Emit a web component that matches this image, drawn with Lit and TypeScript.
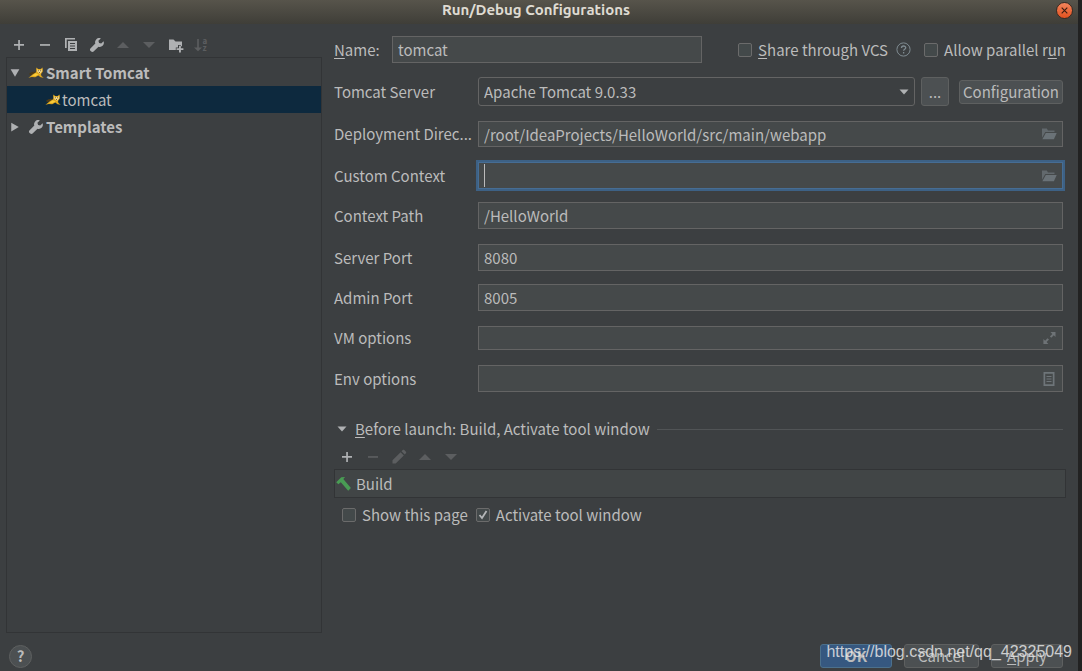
import { LitElement, html, css, svg, TemplateResult } from "lit";
import { customElement } from "lit/decorators.js";
import { classMap } from "lit/directives/class-map.js";

const icon = (body: TemplateResult, size = 16) =>
  html`<svg class="icon" width=${size} height=${size} viewBox="0 0 16 16" aria-hidden="true">${body}</svg>`;

const plus = svg`<path fill="#afb1b3" d="M7.200 3h1.700v4.100H13v1.700H8.900V13H7.200V8.800H3V7.100h4.200z"/>`;
const minus = (fill: string) => svg`<path fill=${fill} d="M3 7.100h10v1.700H3z"/>`;
const up = svg`<path fill="#5c5e60" d="M2 11 8 5l6 6z"/>`;
const down = svg`<path fill="#5c5e60" d="M2 5h12l-6 6z"/>`;
const copy = svg`
  <path fill="#afb1b3" d="M2 1h10v1.600H3.700V11H2z"/>
  <path fill="#afb1b3" fill-rule="evenodd" d="M5 4h9v10H5zM7 6v1h5V6zM7 8.500v1h5v-1zM7 11v1h5v-1z"/>`;
const wrench = svg`<path fill="#afb1b3" d="M14.600 4.200 12.200 6.600 10.100 5.900 9.400 3.800 11.800 1.400C10.200.8 8.400 1.100 7.200 2.400 6.100 3.500 5.800 5.100 6.300 6.500L1.400 11.400C.8 12 .8 13.100 1.400 13.800L2.200 14.600C2.900 15.200 4 15.200 4.600 14.600L9.500 9.700C10.900 10.200 12.500 9.900 13.600 8.800 14.900 7.600 15.200 5.800 14.600 4.200z"/>`;
const newFolder = svg`
  <path fill="#afb1b3" d="M2 2.500h4.500L8.500 4.600H15v4.600h-1.200V8H11v2.600H8.800V13H2z"/>
  <path fill="#afb1b3" d="M12 8.700h1.900v2.500h2.500v1.900h-2.500v2.500H12v-2.500H9.500v-1.900H12z"/>`;
const sort = svg`
  <path fill="#5c5e60" d="M4.200 2h1.600v8.500H9L5 14.200 1 10.500h3.200z"/>
  <text class="tiny" x="9.500" y="7">a</text><text class="tiny" x="9.500" y="14">z</text>`;
const cat = svg`
  <path fill="#4a3a1a" d="M1 8.800C3 7 5 6.300 8 6.800l-2 2.600-4 .6z"/>
  <path fill="#e0a81e" d="M.4 12.800C2.500 11.500 3.500 10.200 5.600 8.800L8.200 7.200 8.300 2.600l1.900 1.500h2.500L14.600 2.600l.2 4-1.800 2.500.4 1.900 2.300 1.700-3.100-.5-2.300-1.600L7.200 12.200l-3.400-.2z"/>
  <path fill="#f4dc92" d="M8.800 4 10.200 5h2.500l1.500-1-.2 2.500-2 2.200-2.600-1.700z"/>
  <path fill="#5b4312" d="M9.900 5.300h.8v.9h-.8zM12.300 5.300h.8v.9h-.8zM11 7.200h1v.8h-1z"/>
  <path fill="#fbcd3a" d="m4 10.800 3.800-2.500 2.800 1.300-2.900 1.500z"/>`;
const folder = svg`
  <path fill="#62696d" d="M1 2.500h4.800l1.200 2h6.500V6H4.300L1 11.800z"/>
  <path fill="#6a7277" d="M4.800 7h10.900L12.900 13.300H1.400z"/>`;
const expand = svg`
  <path fill="#6e7376" d="M9.500 2h5v5L12.800 5.300 10.300 7.800 8.900 6.400l2.400-2.500z"/>
  <path fill="#6e7376" d="M7.400 14h-5V9l1.700 1.700L6.500 8.200 8 9.600l-2.400 2.500z"/>`;
const doc = svg`<path fill="#6e7579" fill-rule="evenodd" d="M2.500 1h11v14h-11zM4.200 2.700v10.600h7.600V2.700zM5.500 5h5v1h-5zM5.500 7.500h5v1h-5zM5.500 10h5v1h-5z"/>`;
const pencil = svg`<path fill="#5c5e60" d="M1.500 14.500v-3.200L9.600 3.200l3.200 3.200-8.100 8.100zM10.500 2.300l1.200-1.200c.5-.5 1.100-.5 1.600 0l1.600 1.600c.5.5.5 1.100 0 1.600l-1.200 1.200z"/>`;
const hammer = svg`<path fill="#499c54" d="M.2 6.200 5.300 1.300l3.800-.2-1.800 2 7.600 8.900-2.700 2.800-7.400-8.600L2.400 8.300z"/>`;
const triDown = svg`<path fill="#afb1b3" d="M1 2h14l-7 12z"/>`;
const triRight = svg`<path fill="#afb1b3" d="M2 1v14l12-7z"/>`;
const arrow = svg`<path fill="#afb1b3" d="M3.500 5.500h9L8 10.500z"/>`;

interface Field {
  id: string;
  label: string;
  value: string;
  trailing?: TemplateResult;
  size?: "small" | "compact";
  focused?: boolean;
  tight?: boolean;
}

const FIELDS: Field[] = [
  { id: "deploy", label: "Deployment Direc...", value: "/root/IdeaProjects/HelloWorld/src/main/webapp", trailing: folder, size: "compact" },
  { id: "custom", label: "Custom Context", value: "", trailing: folder, focused: true, tight: true },
  { id: "path", label: "Context Path", value: "/HelloWorld" },
  { id: "port", label: "Server Port", value: "8080", tight: true },
  { id: "admin", label: "Admin Port", value: "8005" },
  { id: "vm", label: "VM options", value: "", trailing: expand, size: "small" },
  { id: "env", label: "Env options", value: "", trailing: doc },
];

@customElement("app-root")
export class AppRoot extends LitElement {
  static styles = css`
    :host {
      display: block;
      background: #222;
      color: #bbb;
      font: 15px/24px "Noto Sans CJK SC", "Noto Sans", sans-serif;
    }
    * { box-sizing: border-box; }
    input, button, select { font: inherit; color: inherit; margin: 0; }
    .icon { display: block; flex: none; overflow: visible; }
    .tiny { font: bold 8px "Noto Sans CJK SC", sans-serif; fill: #5c5e60; }
    .window {
      position: relative;
      display: flex;
      flex-direction: column;
      min-height: 100vh;
      margin-right: 4px;
      background: #3c3f41;
    }
    .titlebar {
      display: flex;
      align-items: center;
      height: 24px;
      padding: 0 5px 4px 16px;
      background: linear-gradient(#57544b, #3f3e38);
      color: #dfdbd2;
    }
    .title {
      flex: 1;
      margin: 0;
      text-align: center;
      font: bold 15px/20px Ubuntu, "Noto Sans", sans-serif;
    }
    .close {
      display: flex;
      width: 17px;
      height: 17px;
      padding: 0;
      border: 1px solid #3a2a22;
      border-radius: 50%;
      background: linear-gradient(#f4845c, #e2521f);
      align-items: center;
      justify-content: center;
    }
    .body { display: flex; flex: 1; gap: 12px; padding: 0 12px 0 6px; }
    .side { display: flex; flex-direction: column; gap: 4px; width: 316px; padding-top: 13px; }
    .toolbar { display: flex; gap: 10px; padding-left: 5px; }
    .tool { display: block; padding: 0; border: 0; background: none; }
    .tree { flex: 1; margin: 0; padding: 1px 0; border: 1px solid #323436; list-style: none; }
    .node { display: flex; align-items: center; height: 27px; padding-left: 3px; font-weight: bold; }
    .node .gap { margin-left: 8px; margin-right: 2px; }
    .leaf { padding-left: 38px; gap: 1px; background: #0d293e; font-weight: normal; }
    .main { flex: 1; min-width: 0; padding-top: 12px; }
    .row { display: flex; align-items: center; margin-bottom: 15px; padding-right: 3px; }
    .row.tight { margin-bottom: 13px; }
    .row.head { margin-bottom: 14px; padding-right: 0; }
    .label { flex: none; width: 144px; white-space: nowrap; }
    .head .label { width: 58px; }
    .key { text-decoration: underline; text-underline-offset: 2px; text-decoration-thickness: 1px; }
    .field { position: relative; display: flex; flex: 1; min-width: 0; }
    .text {
      width: 100%;
      height: 27px;
      padding: 0 5px;
      border: 1px solid #646464;
      border-radius: 0;
      background: #45494a;
      outline: none;
    }
    .text.compact { height: 26px; }
    .text.small { height: 24px; }
    .text.focused { border-color: #466d94; box-shadow: 0 0 0 2px #3d6185; }
    .caret { position: absolute; left: 6px; top: 2px; bottom: 2px; width: 1px; background: #bbb; }
    .trailing { position: absolute; right: 6px; top: 0; bottom: 0; display: flex; align-items: center; }
    .options { display: flex; align-items: center; margin-left: 36px; }
    .check { display: flex; align-items: center; gap: 6px; white-space: nowrap; }
    .box {
      appearance: none;
      flex: none;
      width: 14px;
      height: 14px;
      border: 1px solid #6b6b6b;
      border-radius: 2px;
      background: #43494a;
    }
    .tick { position: relative; display: flex; }
    .tick .icon { position: absolute; left: 0; top: 0; }
    .hint { margin: 0 13px 0 8px; }
    .select {
      appearance: none;
      width: 100%;
      height: 29px;
      padding: 0 24px 0 5px;
      border: 1px solid #646464;
      border-radius: 3px;
      background: #3c3f41;
    }
    .field .drop { right: 3px; pointer-events: none; }
    .button {
      height: 24px;
      padding: 0;
      border: 1px solid #5e6060;
      border-radius: 3px;
      background: #4c5052;
      line-height: 22px;
    }
    .more { width: 28px; height: 29px; margin-left: 6px; }
    .config { width: 104px; margin-left: 10px; }
    .launch { display: flex; align-items: center; margin: 25px 3px 8px 0; }
    .fold { padding: 0 5px 0 0; border: 0; background: none; }
    .line { flex: 1; height: 1px; margin-left: 7px; background: #515456; }
    .tasks { margin: 4px 0 5px; padding: 0; border: 1px solid #323436; background: #414546; list-style: none; }
    .task { display: flex; align-items: center; gap: 4px; height: 27px; padding-left: 1px; }
    .checks { display: flex; gap: 8px; padding-left: 8px; }
    .footer { display: flex; gap: 12px; align-items: center; padding: 11px 15px 3px 9px; }
    .help {
      width: 23px;
      height: 23px;
      margin-right: auto;
      padding: 0;
      border: 1px solid #5e6060;
      border-radius: 50%;
      background: #4c5052;
      font-weight: bold;
      line-height: 20px;
    }
    .ok { width: 72px; border-color: #4c708c; background: #365880; font-weight: bold; }
    .cancel { width: 75px; }
    .apply { width: 72px; }
    .watermark {
      position: absolute;
      right: 6px;
      bottom: 8px;
      font: 16px/22px "Liberation Sans", sans-serif;
      color: rgba(230, 230, 230, 0.85);
      pointer-events: none;
    }
  `;

  private tool(label: string, body: TemplateResult) {
    return html`<button class="tool" aria-label=${label}>${icon(body)}</button>`;
  }

  private field(f: Field) {
    return html`<div class=${classMap({ row: true, tight: !!f.tight })}>
      <label class="label" for=${f.id}>${f.label}</label>
      <div class="field">
        <input id=${f.id} type="text" .value=${f.value}
          class=${classMap({ text: true, compact: f.size === "compact", small: f.size === "small", focused: !!f.focused })} />
        ${f.focused ? html`<span class="caret"></span>` : ""}
        ${f.trailing ? html`<span class="trailing">${icon(f.trailing)}</span>` : ""}
      </div>
    </div>`;
  }

  render() {
    return html`<div class="window">
      <header class="titlebar">
        <h1 class="title">Run/Debug Configurations</h1>
        <button class="close" aria-label="Close">${icon(svg`<path d="m3 3 10 10M13 3 3 13" stroke="#3b1c10" stroke-width="2"/>`, 9)}</button>
      </header>
      <div class="body">
        <aside class="side">
          <div class="toolbar">
            ${this.tool("Add", plus)}${this.tool("Remove", minus("#afb1b3"))}${this.tool("Copy", copy)}
            ${this.tool("Edit templates", wrench)}${this.tool("Move up", up)}${this.tool("Move down", down)}
            ${this.tool("New folder", newFolder)}${this.tool("Sort", sort)}
          </div>
          <ul class="tree">
            <li class="node">${icon(triDown, 10)}<span class="gap">${icon(cat)}</span>Smart Tomcat</li>
            <li class="node leaf">${icon(cat)}tomcat</li>
            <li class="node">${icon(triRight, 10)}<span class="gap">${icon(wrench)}</span>Templates</li>
          </ul>
        </aside>
        <main class="main">
          <div class="row head">
            <label class="label" for="name"><span class="key">N</span>ame:</label>
            <div class="field"><input id="name" class="text" type="text" .value=${"tomcat"} /></div>
            <div class="options">
              <label class="check"><input class="box" type="checkbox" /><span><span class="key">S</span>hare through VCS</span></label>
              <span class="hint"><svg class="icon" width="15" height="15" viewBox="0 0 15 15" aria-hidden="true">
                <circle cx="7.500" cy="7.500" r="6.600" fill="none" stroke="#7f8b91" />
                <path d="M5.500 6c0-2.700 4.200-2.600 4.200-.2 0 1.400-2.100 1.500-2.100 3M7.600 10.100v1.400" fill="none" stroke="#7f8b91" stroke-width="1.300" />
              </svg></span>
              <label class="check"><input class="box" type="checkbox" /><span>Allow parallel r<span class="key">u</span>n</span></label>
            </div>
          </div>
          <div class="row">
            <label class="label" for="server">Tomcat Server</label>
            <div class="field">
              <select id="server" class="select"><option>Apache Tomcat 9.0.33</option></select>
              <span class="trailing drop">${icon(arrow)}</span>
            </div>
            <button class="button more">...</button>
            <button class="button config">Configuration</button>
          </div>
          ${FIELDS.map((f) => this.field(f))}
          <div class="launch">
            <button class="fold" aria-label="Collapse">${icon(arrow)}</button>
            <span><span class="key">B</span>efore launch: Build, Activate tool window</span>
            <span class="line"></span>
          </div>
          <div class="toolbar">
            ${this.tool("Add task", plus)}${this.tool("Remove task", minus("#5c5e60"))}${this.tool("Edit task", pencil)}
            ${this.tool("Move task up", up)}${this.tool("Move task down", down)}
          </div>
          <ul class="tasks"><li class="task">${icon(hammer)}Build</li></ul>
          <div class="checks">
            <label class="check"><input class="box" type="checkbox" />Show this page</label>
            <label class="check"><span class="tick"><input class="box" type="checkbox" checked />
              <svg class="icon" width="14" height="14" viewBox="0 0 14 14" aria-hidden="true"><path d="m3.500 7 2.500 3L10.500 3" fill="none" stroke="#b4b6b8" stroke-width="1.800" /></svg></span>Activate tool window</label>
          </div>
        </main>
      </div>
      <footer class="footer">
        <button class="help" aria-label="Help">?</button>
        <button class="button ok">OK</button>
        <button class="button cancel">Cancel</button>
        <button class="button apply"><span class="key">A</span>pply</button>
      </footer>
      <div class="watermark">https://blog.csdn.net/qq_42325049</div>
    </div>`;
  }
}
